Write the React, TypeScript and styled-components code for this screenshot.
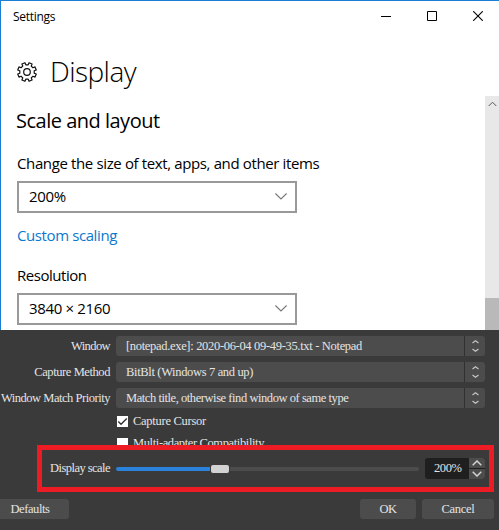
import React from 'react';
import styled, { createGlobalStyle } from 'styled-components';

const GlobalStyle = createGlobalStyle`
  * { box-sizing: border-box; }
  body { margin: 0; background: #3a3a3a; overflow: hidden; }
`;

const Screen = styled.main`
  width: 499px;
  height: 530px;
  display: flex;
  flex-direction: column;
  overflow: hidden;
`;

/* ---------- Settings window ---------- */

const SettingsWindow = styled.section`
  height: 330px;
  flex: none;
  display: flex;
  flex-direction: column;
  background: #fff;
  color: #000;
  border-top: 1px solid #1a7fd4;
  border-left: 1px solid #1a7fd4;
  font-family: 'Open Sans', 'Noto Sans', sans-serif;
`;

const TitleBar = styled.header`
  height: 30px;
  flex: none;
  display: flex;
  align-items: center;
  justify-content: space-between;
  padding-left: 12px;
  font-size: 12px;
  letter-spacing: -0.3px;
`;

const WindowControls = styled.div`
  display: flex;
  height: 30px;
`;

const WindowControl = styled.div`
  width: 46px;
  display: grid;
  place-items: center;

  &:last-child { width: 44px; padding-left: 2px; }
  svg { display: block; }
`;

const Heading = styled.div`
  height: 40px;
  margin-top: 20px;
  padding-left: 16px;
  flex: none;
  display: flex;
  align-items: center;
  gap: 13px;
  svg { margin-top: 2px; }
`;

const PageTitle = styled.h1`
  margin: 0;
  font-size: 28px;
  font-weight: 300;
  line-height: 40px;
  letter-spacing: -0.55px;
`;

const Body = styled.div`
  flex: 1;
  margin-top: 5px;
  display: flex;
  justify-content: space-between;
`;

const Form = styled.div`
  padding: 11px 0 0 15px;
  display: flex;
  flex-direction: column;
  align-items: flex-start;
`;

const SectionTitle = styled.h2`
  margin: 0 0 18px;
  font-size: 20px;
  font-weight: 400;
  line-height: 28px;
  letter-spacing: -0.5px;
  white-space: nowrap;
`;

const FieldLabel = styled.div<{ $spacing: number }>`
  height: 20px;
  margin: 0 0 8px 1px;
  font-size: 15px;
  line-height: 20px;
  letter-spacing: ${(p) => p.$spacing}px;
  white-space: nowrap;
`;

const SelectBox = styled.div`
  width: 280px;
  height: 32px;
  margin-left: 1px;
  padding: 0 8px 2px 10px;
  display: flex;
  align-items: center;
  justify-content: space-between;
  border: 2px solid #999;
  font-size: 15px;
  letter-spacing: -0.35px;
`;

const Link = styled.a`
  margin: 12px 0 20px 1px;
  font-size: 15px;
  line-height: 20px;
  letter-spacing: -0.4px;
  color: #0a78d0;
`;

const Scrollbar = styled.div`
  width: 14px;
  display: flex;
  flex-direction: column;
  justify-content: space-between;
  background: #e8e8e8;
  svg { display: block; margin: 5px 0 0 3px; }
`;

const ScrollThumb = styled.div`
  height: 32px;
  background: #b9b9b9;
`;

/* ---------- Source properties panel ---------- */

const Panel = styled.section`
  flex: 1;
  display: flex;
  flex-direction: column;
  background: #3a3a3a;
  color: #e4e4e4;
  font-family: 'Liberation Serif', serif;
  font-size: 12.5px;
`;

const Properties = styled.div`
  height: 115px;
  flex: none;
  padding-top: 6px;
  display: flex;
  flex-direction: column;
  gap: 6px;
  overflow: hidden;
`;

const PropertyRow = styled.div`
  height: 20px;
  flex: none;
  display: grid;
  grid-template-columns: 110px 369px;
  column-gap: 6px;
  align-items: center;
`;

const Label = styled.span<{ $spacing: number }>`
  text-align: right;
  white-space: nowrap;
  letter-spacing: ${(p) => p.$spacing}px;
`;

const Combo = styled.div<{ $spacing: number }>`
  height: 20px;
  padding-left: 10px;
  display: flex;
  align-items: center;
  justify-content: space-between;
  background: #4c4c4c;
  border-radius: 3px;
  white-space: nowrap;
  letter-spacing: ${(p) => p.$spacing}px;
`;

const ComboArrows = styled.span`
  width: 21px;
  height: 20px;
  border-left: 1px solid #303030;
  display: grid;
  place-items: center;
  svg { display: block; }
`;

const Checks = styled.div`
  flex: none;
  margin-top: -3px;
  padding-left: 117px;
  display: flex;
  flex-direction: column;
`;

const CheckRow = styled.div<{ $spacing: number }>`
  height: 22px;
  padding-bottom: 1px;
  display: flex;
  align-items: center;
  gap: 5px;
  white-space: nowrap;
  letter-spacing: ${(p) => p.$spacing}px;
`;

const CheckBox = styled.span`
  width: 11px;
  height: 11px;
  background: #fff;
  svg { display: block; }
`;

const HighlightedRow = styled.div`
  width: 457px;
  height: 47px;
  flex: none;
  margin-left: 37px;
  padding: 0 4px 0 5px;
  border: 5px solid #ed1c24;
  display: grid;
  grid-template-columns: 63px 303px 60px;
  column-gap: 6px;
  align-items: center;
`;

const Slider = styled.div`
  height: 8px;
  display: flex;
  align-items: center;
`;

const SliderFill = styled.div`
  width: 94px;
  height: 4px;
  background: #2a82da;
  border-radius: 2px 0 0 2px;
`;

const SliderHandle = styled.div`
  width: 18px;
  height: 8px;
  margin: 0 1px;
  background: #d2d2d2;
  border-radius: 2px;
`;

const SliderRest = styled.div`
  flex: 1;
  height: 4px;
  background: #4c4c4c;
  border-radius: 0 2px 2px 0;
`;

const SpinBox = styled.div`
  height: 21px;
  display: grid;
  grid-template-columns: 44px 16px;
  background: #1f1f1f;
  border-radius: 3px;
  overflow: hidden;
`;

const SpinValue = styled.span`
  padding: 3px 0 0 9px;
  line-height: 15px;
  letter-spacing: -0.4px;
`;

const SpinButtons = styled.span`
  display: grid;
  grid-template-rows: 10px 10px;
  row-gap: 1px;
`;

const SpinButton = styled.span`
  background: #4c4c4c;
  display: grid;
  place-items: center;
  svg { display: block; }
`;

const Footer = styled.footer`
  margin-top: 7px;
  padding-right: 5px;
  display: flex;
  gap: 6px;
`;

const Button = styled.div<{ $width: number; $spacing: number }>`
  width: ${(p) => p.$width}px;
  height: 20px;
  display: flex;
  align-items: center;
  justify-content: center;
  background: #4c4c4c;
  border-radius: 3px;
  letter-spacing: ${(p) => p.$spacing}px;
`;

/* Runs off the left edge of the panel, so its caption sits left of centre. */
const DefaultsButton = styled(Button)`
  margin-right: auto;
  padding-right: 9px;
  border-radius: 0 3px 3px 0;
`;

/* ---------- Icons ---------- */

const gearPath = (() => {
  const teeth = 8;
  const points: string[] = [];
  const offsets: [number, number][] = [[-13, 7.3], [-10, 9.5], [10, 9.5], [13, 7.3]];
  for (let i = 0; i < teeth; i++) {
    for (const [offset, radius] of offsets) {
      const a = ((i * 45 + 22.5 + offset) * Math.PI) / 180;
      points.push(`${(10 + radius * Math.cos(a)).toFixed(2)} ${(10 + radius * Math.sin(a)).toFixed(2)}`);
    }
  }
  return `M${points.join('L')}Z`;
})();

const GearIcon = () => (
  <svg width="20" height="20" viewBox="0 0 20 20" fill="none" stroke="#111" strokeWidth="1.2" strokeLinejoin="round">
    <path d={gearPath} />
    <circle cx="10" cy="10" r="3.3" />
  </svg>
);

const ChevronDown = () => (
  <svg width="12" height="7" viewBox="0 0 12 7" fill="none" stroke="#777" strokeWidth="1.1">
    <path d="M.4.5 6 6 11.6.5" />
  </svg>
);

const UpDownIcon = () => (
  <svg width="7" height="12" viewBox="0 0 7 12" fill="none" stroke="#c8c8c8" strokeWidth="1.1">
    <path d="M.5 3 3.5.8 6.5 3M.5 9 3.5 11.2 6.5 9" />
  </svg>
);

const SpinArrow = ({ down = false }: { down?: boolean }) => (
  <svg width="10" height="6" viewBox="0 0 10 6" fill="none" stroke="#d2d2d2" strokeWidth="1.5">
    <path d={down ? 'M.7.8 5 5 9.3.8' : 'M.7 5.2 5 1 9.3 5.2'} />
  </svg>
);

const comboRows = [
  { label: 'Window', ls: -0.6, value: '[notepad.exe]: 2020-06-04 09-49-35.txt - Notepad', vs: -0.32 },
  { label: 'Capture Method', ls: -0.42, value: 'BitBlt (Windows 7 and up)', vs: -0.34 },
  { label: 'Window Match Priority', ls: -0.47, value: 'Match title, otherwise find window of same type', vs: -0.44 },
];

export default function App() {
  return (
    <Screen>
      <GlobalStyle />
      <SettingsWindow>
        <TitleBar>
          Settings
          <WindowControls>
            <WindowControl>
              <svg width="10" height="10"><path d="M0 5.5H10" stroke="#000" /></svg>
            </WindowControl>
            <WindowControl>
              <svg width="10" height="10"><path d="M.5.5h9v9h-9z" fill="none" stroke="#000" /></svg>
            </WindowControl>
            <WindowControl>
              <svg width="10" height="10"><path d="M.2.2l9.6 9.6M9.8.2.2 9.8" stroke="#000" strokeWidth="1.1" /></svg>
            </WindowControl>
          </WindowControls>
        </TitleBar>
        <Heading>
          <GearIcon />
          <PageTitle>Display</PageTitle>
        </Heading>
        <Body>
          <Form>
            <SectionTitle>Scale and layout</SectionTitle>
            <FieldLabel $spacing={-0.37}>Change the size of text, apps, and other items</FieldLabel>
            <SelectBox>200%<ChevronDown /></SelectBox>
            <Link>Custom scaling</Link>
            <FieldLabel $spacing={-0.47}>Resolution</FieldLabel>
            <SelectBox>3840 × 2160<ChevronDown /></SelectBox>
          </Form>
          <Scrollbar>
            <svg width="9" height="6" viewBox="0 0 9 6" fill="none" stroke="#555">
              <path d="M.7 5 4.5 1.2 8.3 5" />
            </svg>
            <ScrollThumb />
          </Scrollbar>
        </Body>
      </SettingsWindow>

      <Panel>
        <Properties>
          {comboRows.map((row) => (
            <PropertyRow key={row.label}>
              <Label $spacing={row.ls}>{row.label}</Label>
              <Combo $spacing={row.vs}>
                {row.value}
                <ComboArrows><UpDownIcon /></ComboArrows>
              </Combo>
            </PropertyRow>
          ))}
          <Checks>
            <CheckRow $spacing={-0.27}>
              <CheckBox>
                <svg width="11" height="11" fill="none" stroke="#333" strokeWidth="1.4">
                  <path d="M1.3 5.6 4 8.2 9.8 2.4" />
                </svg>
              </CheckBox>
              Capture Cursor
            </CheckRow>
            <CheckRow $spacing={-0.38}>
              <CheckBox />
              Multi-adapter Compatibility
            </CheckRow>
          </Checks>
        </Properties>
        <HighlightedRow>
          <Label $spacing={-0.54}>Display scale</Label>
          <Slider>
            <SliderFill />
            <SliderHandle />
            <SliderRest />
          </Slider>
          <SpinBox>
            <SpinValue>200%</SpinValue>
            <SpinButtons>
              <SpinButton><SpinArrow /></SpinButton>
              <SpinButton><SpinArrow down /></SpinButton>
            </SpinButtons>
          </SpinBox>
        </HighlightedRow>
        <Footer>
          <DefaultsButton $width={69} $spacing={-0.4}>Defaults</DefaultsButton>
          <Button $width={56} $spacing={-0.6}>OK</Button>
          <Button $width={72} $spacing={-0.28}>Cancel</Button>
        </Footer>
      </Panel>
    </Screen>
  );
}
